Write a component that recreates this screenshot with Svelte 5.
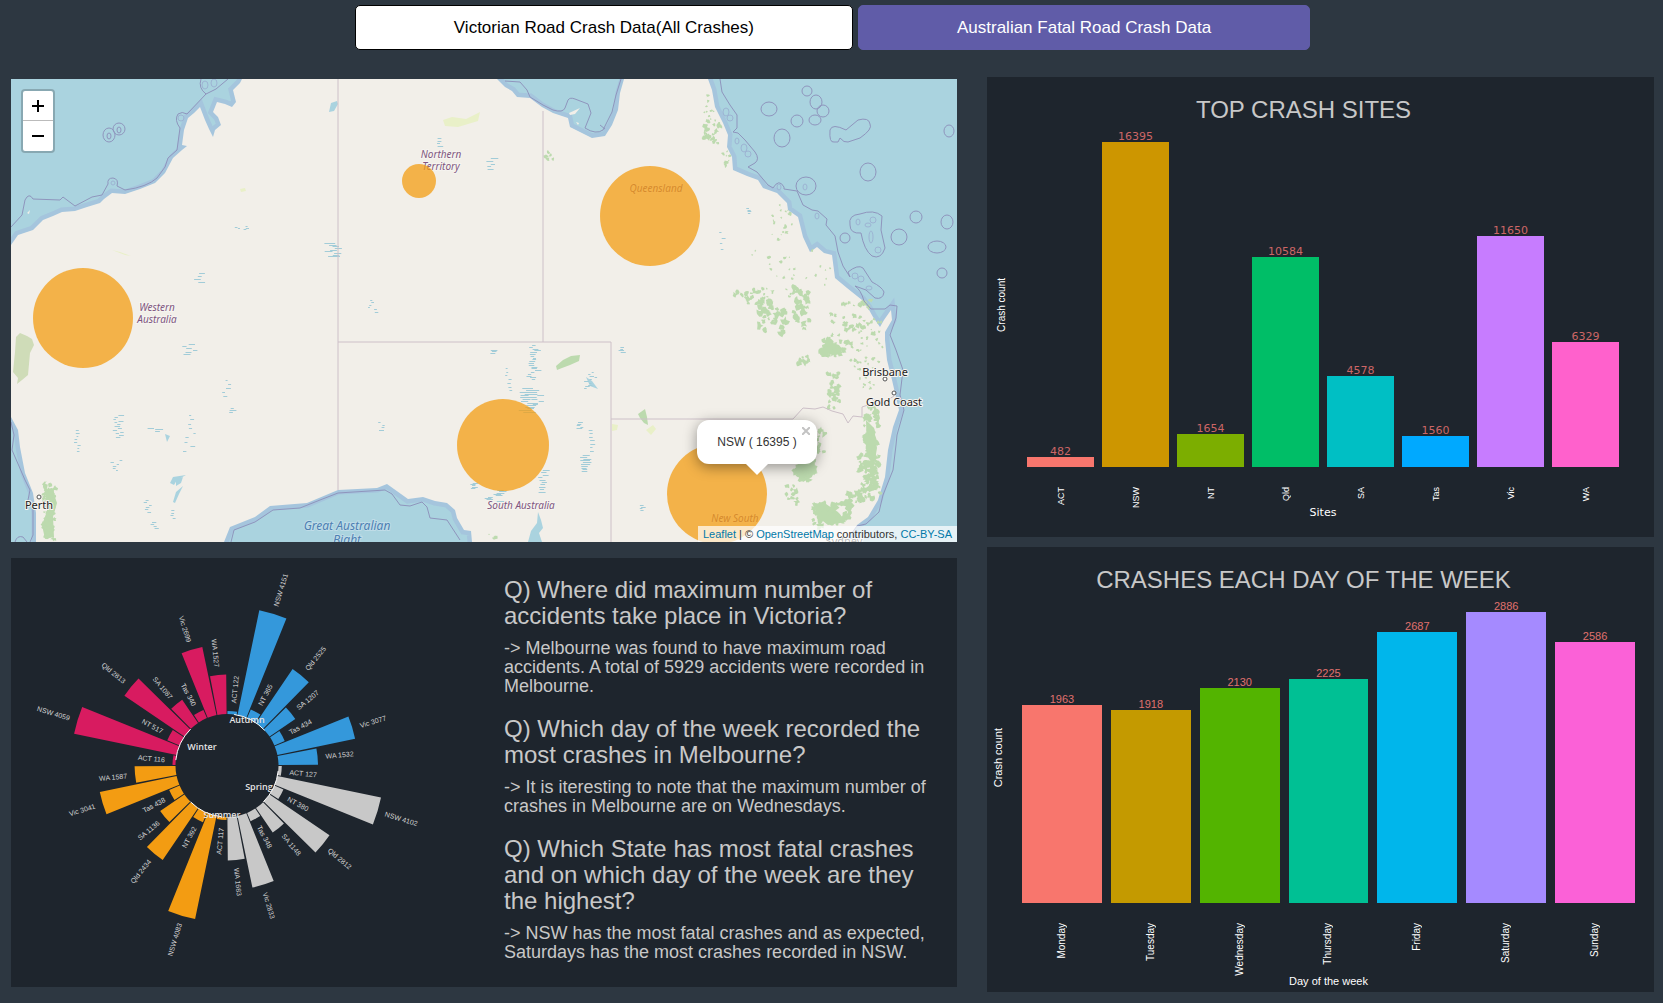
<script>
  const sites = {
    title: 'TOP CRASH SITES',
    kind: 'sites',
    xLabel: 'Sites',
    height: 325,
    bars: [
      { name: 'ACT', value: 482, color: '#f8766d' },
      { name: 'NSW', value: 16395, color: '#cd9600' },
      { name: 'NT', value: 1654, color: '#7cae00' },
      { name: 'Qld', value: 10584, color: '#00be67' },
      { name: 'SA', value: 4578, color: '#00bfc4' },
      { name: 'Tas', value: 1560, color: '#00a9ff' },
      { name: 'Vic', value: 11650, color: '#c77cff' },
      { name: 'WA', value: 6329, color: '#ff61cc' }
    ]
  };
  const days = {
    title: 'CRASHES EACH DAY OF THE WEEK',
    kind: 'days',
    xLabel: 'Day of the week',
    height: 291,
    bars: [
      { name: 'Monday', value: 1963, color: '#f8766d' },
      { name: 'Tuesday', value: 1918, color: '#c49a00' },
      { name: 'Wednesday', value: 2130, color: '#53b400' },
      { name: 'Thursday', value: 2225, color: '#00c094' },
      { name: 'Friday', value: 2687, color: '#00b6eb' },
      { name: 'Saturday', value: 2886, color: '#a58aff' },
      { name: 'Sunday', value: 2586, color: '#fb61d7' }
    ]
  };

  function barHeight(chart, value) {
    const max = Math.max(...chart.bars.map((b) => b.value));
    return Math.round((value / max) * chart.height);
  }

  const faqs = [
    ['Q) Where did maximum number of accidents take place in Victoria?', '-> Melbourne was found to have maximum road accidents. A total of 5929 accidents were recorded in Melbourne.'],
    ['Q) Which day of the week recorded the most crashes in Melbourne?', '-> It is iteresting to note that the maximum number of crashes in Melbourne are on Wednesdays.'],
    ['Q) Which State has most fatal crashes and on which day of the week are they the highest?', '-> NSW has the most fatal crashes and as expected, Saturdays has the most crashes recorded in NSW.']
  ];

  // Circular bar chart: seasons run clockwise from twelve o'clock, one quarter each.
  const states = ['ACT', 'NSW', 'NT', 'Qld', 'SA', 'Tas', 'Vic', 'WA'];
  const seasons = [
    { name: 'Autumn', color: '#3498db', values: [122, 4151, 365, 2525, 1207, 434, 3077, 1532], x: 247, y: 723 },
    { name: 'Spring', color: '#c8c8c8', values: [127, 4102, 380, 2812, 1148, 348, 2833, 1683], x: 259, y: 790 },
    { name: 'Summer', color: '#f39c12', values: [117, 4083, 392, 2434, 1136, 438, 3041, 1587], x: 222, y: 818 },
    { name: 'Winter', color: '#d81b60', values: [116, 4059, 517, 2813, 1087, 340, 2699, 1527], x: 202, y: 750 }
  ];
  const cx = 227;
  const cy = 765.5;
  const inner = 51.5;
  const step = 11.25;
  const at = (deg, r) => {
    const a = (deg * Math.PI) / 180;
    return `${(cx + r * Math.sin(a)).toFixed(1)} ${(cy - r * Math.cos(a)).toFixed(1)}`;
  };
  const petals = seasons.flatMap((s, q) =>
    s.values.map((value, i) => {
      const from = q * 90 + i * step + 0.5;
      const to = from + step - 1;
      const mid = (from + to) / 2;
      const outer = inner + value * 0.0258;
      return {
        color: s.color,
        d: `M${at(from, inner)}L${at(from, outer)}A${outer} ${outer} 0 0 1 ${at(to, outer)}L${at(to, inner)}A${inner} ${inner} 0 0 0 ${at(from, inner)}Z`,
        label: `${states[i]} ${value}`,
        flip: mid > 180,
        turn: mid > 180 ? mid + 90 : mid - 90,
        reach: outer + 8
      };
    })
  );
  const arcs = [8, 96, 186, 276].map((a) => `M${at(a, inner)}A${inner} ${inner} 0 0 1 ${at(a + 39, inner)}`);

  // Map decoration
  const land =
    'M11 245L18 235 33 230 43 220 53 216 62 212 75 211 87 207 100 203 104 199 112 193 125 194 140 189 155 183 165 173 173 158 182 150 187 146 182 145 184 130 188 118 194 113 200 107 205 120 209 129 213 137 215 130 221 125 218 117 213 112 217 102 225 104 232 107 236 102 233 90 240 83 242 79H497L505 87 512 91 517 97 530 98 542 107 553 113 568 118 570 127 580 132 592 138 605 136 612 125 618 110 620 93 624 79H708L712 90 715 107 723 123 728 135 727 147 732 157 733 170 747 176 758 180 763 188 777 193 787 203 788 210 798 217 803 237 810 252 817 247 824 253 832 255 835 278 847 288 862 300 868 308 873 317 880 327 884 320 891 310 892 320 885 332 885 340 887 360 892 380 895 393 899 410 893 427 888 450 885 477 878 500 868 517 857 525 847 542H472L471 531 464 530 457 518 455 510 447 503 435 501 423 497 408 499 387 484 377 488 338 490 307 503 270 506 255 517 230 527 224 542H36V513L33 493 25 473 20 447 18 430 11 417Z';
  const limits = [
    'M11 227L22 215 25 200Q29 192 33 199L60 200 63 197 75 206 92 197 102 195 108 184Q107 178 113 178Q119 179 117 186L125 190Q147 187 157 178L165 167 168 158 177 150 180 128Q174 120 178 114Q182 111 187 114L206 94 216 89 228 79M206 94Q198 88 201 79',
    'M505 81L520 82 527 90 530 97 543 105 553 110Q563 113 565 108L568 100Q570 97 575 99L588 104 591 113 585 128Q596 135 603 130L612 112 616 95 621 79M600 125l5 4',
    'M720 79L722 92 730 105 737 115 737 128 733 132 738 133 745 140 755 152Q760 159 755 163L748 167 757 172 768 185 773 188Q779 178 784 187L784 189 797 191 803 205 812 210 818 211 827 219 826 225 835 236 838 252 843 266 850 277 848 272Q858 264 863 268L872 282Q882 287 884 292Q883 300 875 298L866 290 855 286Q861 290 864 301L871 309 885 309 890 305 897 306 896 318 890 335 896 350 903 370 900 395 904 410 897 435 896 445 893 470 883 495 879 512 866 524 857 526 845 542',
    'M231 542L234 530 255 522 273 510 300 508 320 500 338 493 385 490 392 494 400 505 410 506 422 502 427 507 430 518 447 520 460 540',
    'M11 422L14 435 12 450 25 480 30 490 28 500 33 510 33 535 30 542M15 542Q17 535 23 537L27 542',
    'M830 130Q829 143 834 142L838 142 840 138Q844 143 848 142L860 138Q873 129 870 124Q869 117 858 120L846 130Q832 123 830 130Z',
    'M850 225Q848 215 860 214Q874 209 882 216L881 230 885 248Q881 260 872 256Q864 250 861 233Q850 234 850 225Z'
  ];
  const rings = [
    [109, 135, 6, 7], [119, 129, 6, 6], [109, 136, 2, 3], [119, 130, 2, 3], [769, 109, 8, 7], [807, 91, 5, 5], [816, 102, 6, 7], [823, 111, 6, 6], [815, 120, 6, 5],
    [797, 121, 6, 6], [782, 138, 8, 9], [868, 172, 8, 9], [949, 131, 5, 6], [806, 186, 10, 9], [916, 217, 6, 6],
    [947, 222, 6, 7], [899, 237, 8, 8], [937, 247, 9, 6], [845, 238, 5, 5], [942, 273, 5, 5]
  ];
  const reefs = [
    [726, 112, 3, 4], [730, 118, 3, 3], [737, 141, 2, 3], [744, 148, 3, 4], [748, 154, 3, 3], [805, 187, 2, 3], [779, 187, 2, 3],
    [817, 216, 2, 3], [858, 222, 2, 3], [868, 225, 3, 2], [873, 220, 3, 3], [871, 237, 2, 6], [878, 250, 3, 3], [855, 276, 3, 3],
    [861, 279, 3, 3], [869, 288, 3, 2], [113, 183, 2, 2], [181, 118, 3, 3], [205, 85, 3, 4], [214, 83, 3, 4]
  ];

  function random(seed) {
    return () => {
      seed = (seed * 16807) % 2147483647;
      return seed / 2147483647;
    };
  }
  const next = random(4177);
  // x, y, width, height, count, size
  const woods = [
    [704, 95, 10, 40, 14, 2], [704, 120, 16, 24, 20, 3], [722, 150, 8, 18, 10, 2], [772, 205, 20, 35, 20, 2],
    [750, 250, 80, 50, 34, 2], [735, 290, 35, 14, 22, 3], [758, 300, 28, 34, 34, 4], [793, 285, 16, 48, 32, 4],
    [825, 300, 50, 45, 40, 3], [820, 340, 28, 16, 26, 4], [850, 320, 33, 70, 44, 2], [828, 372, 13, 36, 34, 3],
    [864, 405, 14, 85, 80, 4], [858, 455, 22, 45, 44, 4], [813, 430, 12, 24, 18, 4], [795, 458, 20, 22, 34, 4],
    [785, 485, 12, 18, 12, 3], [812, 502, 38, 24, 60, 4], [845, 490, 16, 14, 18, 3], [43, 482, 12, 58, 70, 3],
    [544, 152, 10, 8, 9, 2], [486, 534, 12, 5, 6, 2], [796, 355, 14, 10, 10, 3]
  ];
  function blob(x, y, r) {
    let d = '';
    for (let i = 0; i < 9; i += 1) {
      const a = (i / 9) * Math.PI * 2;
      const k = r * (0.4 + next() * 0.9);
      d += `${i ? 'L' : 'M'}${(x + k * Math.cos(a)).toFixed(1)} ${(y + k * Math.sin(a)).toFixed(1)}`;
    }
    return d + 'Z';
  }
  const forest = woods
    .map(([x, y, w, h, n, s]) => Array.from({ length: n }, () => blob(x + next() * w, y + next() * h, s * (0.4 + next() * 0.6))).join(''))
    .join('');
  const waters = [
    [324, 243, 18, 15, 9, 12], [194, 273, 10, 12, 4, 8], [484, 158, 12, 14, 5, 8], [436, 138, 6, 10, 4, 6], [180, 344, 22, 12, 6, 8],
    [112, 415, 14, 24, 13, 6], [146, 428, 18, 4, 3, 10], [74, 430, 6, 24, 8, 4], [183, 415, 20, 40, 9, 5], [228, 408, 8, 6, 3, 7],
    [222, 380, 14, 20, 5, 5], [110, 460, 16, 12, 6, 4], [170, 510, 5, 10, 4, 5], [142, 500, 12, 14, 6, 5], [148, 522, 14, 8, 4, 6],
    [378, 422, 8, 10, 4, 5], [526, 345, 16, 36, 20, 7], [518, 388, 16, 26, 14, 15], [530, 390, 16, 16, 7, 8], [584, 372, 18, 18, 10, 5],
    [538, 470, 8, 24, 10, 8], [576, 422, 10, 8, 5, 6], [588, 430, 4, 24, 7, 5], [580, 455, 6, 18, 10, 10], [490, 350, 8, 4, 3, 8],
    [505, 368, 8, 26, 7, 4], [483, 490, 30, 12, 9, 8], [470, 483, 8, 6, 5, 6], [618, 347, 6, 6, 4, 6], [638, 505, 10, 6, 4, 5],
    [366, 300, 24, 14, 6, 4], [232, 226, 24, 4, 5, 4], [718, 232, 8, 22, 4, 4], [746, 208, 4, 6, 4, 4]
  ];
  const lakes = waters
    .map(([x, y, w, h, n, len]) =>
      Array.from({ length: n }, (_, i) => {
        const ly = Math.round(y + (i / n) * h) + 0.5;
        return `M${(x + next() * w * 0.6).toFixed(1)} ${ly}h${(len * (0.4 + next() * 0.6)).toFixed(1)}`;
      }).join('')
    )
    .join('');

  const crashCircles = [
    [83, 318, 50], [419, 181, 17], [650, 216, 50], [503, 445, 46], [717, 494, 50]
  ];
  let popupOpen = $state(true);
  let zoom = $state(5);
</script>

{#snippet barChart(chart)}
  <section class="panel chart {chart.kind}">
    <h3>{chart.title}</h3>
    <div class="chart-body">
      <span class="y-label">Crash count</span>
      <div class="bars">
        {#each chart.bars as bar}
          <div class="bar-slot">
            <span class="value">{bar.value}</span>
            <div class="bar" style="height: {barHeight(chart, bar.value)}px; background: {bar.color}"></div>
          </div>
        {/each}
      </div>
      <div class="ticks">
        {#each chart.bars as bar}
          <span>{bar.name}</span>
        {/each}
      </div>
      <span class="x-label">{chart.xLabel}</span>
    </div>
  </section>
{/snippet}

<div class="page">
  <nav class="tabs">
    <button class="tab" type="button">Victorian Road Crash Data(All Crashes)</button>
    <button class="tab active" type="button">Australian Fatal Road Crash Data</button>
  </nav>

  <main class="dashboard">
    <div class="left">
      <div class="map">
        <svg class="tiles" viewBox="11 79 946 463" preserveAspectRatio="xMidYMid slice" role="img" aria-label="Map of Australia">
          <rect class="sea" x="11" y="79" width="946" height="463" />
          <path class="shelf" d={land} />
          <path class="land" d={land} />
          <path class="sea" d="M528 542L531 531 537 523 538 512 541 520 543 528 539 533 542 542ZM331 103l6-2 1 3-4 7-5 1Z" />
          <path class="sea" d="M176 480l7-3-2 6-5 3ZM170 483l3-6 13-2-9 5-3 5ZM173 502l3-10 7-6-4 8-4 9ZM165 434l5 2-3 6ZM586 377l6 4 6 8-8-3Z" />
          <path class="land" d="M569 113l11-5-5 6-5 1ZM576 122l3 1-1 2ZM27 213l3-3-1 4Z" />
          <path class="park" d="M16 337l4-4 7 3 5 3 2 6-4 8-2 22-6 5-5 4 1-6-5-6 2-20Z" />
          <path class="forest" d="M556 366l7-6 8-4 9-1-1 6-9 4-8 3-5 2ZM638 414l7-5 2 8 1 8-4-2-4-5ZM822 345l8-3 9 3 4 5-8 5-12-2ZM812 503l14 1 12 8 8 10-18 3-9-7ZM800 463l14 2-2 12-9 5-5-6ZM866 420l8 8 3 20-3 18-7-10ZM45 490l7-2 5 15-4 14 1 20-9 2-3-14 5-14Z" />
          <path class="meadow" d="M646 430l7-5 3 4-5 6ZM612 424l6 1-1 5-5 1ZM112 250l8 2 11 4-6-1ZM443 120l9-3 14 2 14-7-2 9-20 6-13-1ZM240 189l5-1 1 3-5 1Z" />
          <path class="forest" d={forest} />
          <path class="lakes" d={lakes} />
          <path class="border" d="M338 79V490M543 111V342M338 342H611V542M611 419H793L803 408 815 409 823 407 832 411 843 414 848 423 853 416 862 417 862 407 868 405 874 400 886 401 894 396" />
          {#each limits as d}
            <path class="limit" {d} />
          {/each}
          {#each rings as [x, y, rx, ry]}
            <ellipse class="limit" cx={x} cy={y} {rx} {ry} />
          {/each}
          {#each reefs as [x, y, rx, ry]}
            <ellipse class="reef" cx={x} cy={y} {rx} {ry} />
          {/each}

          <g class="region">
            <text x="441" y="158">Northern</text>
            <text x="441" y="170">Territory</text>
            <text x="157" y="311">Western</text>
            <text x="157" y="323">Australia</text>
            <text x="521" y="509">South Australia</text>
            <text x="656" y="192">Queensland</text>
            <text x="735" y="522">New South</text>
          </g>
          <g class="water-name">
            <text x="347" y="530">Great Australian</text>
            <text x="347" y="544">Bight</text>
          </g>
          <g class="city">
            <circle cx="885" cy="379" r="2" />
            <circle cx="894" cy="393" r="2" />
            <circle cx="39" cy="497" r="2" />
            <text x="885" y="376">Brisbane</text>
            <text x="894" y="406">Gold Coast</text>
            <text x="39" y="509">Perth</text>
            <text x="844" y="545">Sydney</text>
          </g>
          {#each crashCircles as [x, y, r]}
            <circle class="crash" cx={x} cy={y} {r} />
          {/each}
        </svg>

        <div class="zoom">
          <button type="button" aria-label="Zoom in" onclick={() => (zoom += 1)}>
            <svg viewBox="0 0 12 12" width="12" height="12"><path d="M0 6H12M6 0V12" /></svg>
          </button>
          <button type="button" aria-label="Zoom out" onclick={() => (zoom -= 1)}>
            <svg viewBox="0 0 12 12" width="12" height="12"><path d="M0 6H12" /></svg>
          </button>
        </div>

        {#if popupOpen}
          <div class="popup">
            <span>NSW ( 16395 )</span>
            <button type="button" aria-label="Close popup" onclick={() => (popupOpen = false)}>
              <svg viewBox="0 0 8 8" width="8" height="8"><path d="M0 0L8 8M8 0L0 8" /></svg>
            </button>
          </div>
        {/if}

        <div class="attribution">
          <a href="#leaflet">Leaflet</a> | © <a href="#osm">OpenStreetMap</a> contributors, <a href="#licence">CC-BY-SA</a>
        </div>
      </div>

      <section class="panel insights">
        <svg class="rose" viewBox="11 558 493 429" role="img" aria-label="Fatal crashes by season and state">
          {#each petals as p}
            <path d={p.d} fill={p.color} />
          {/each}
          {#each arcs as d}
            <path class="arc" {d} />
          {/each}
          {#each petals as p}
            <text
              class="petal-label"
              transform="translate({cx} {cy}) rotate({p.turn})"
              x={p.flip ? -p.reach : p.reach}
              y="3"
              text-anchor={p.flip ? 'end' : 'start'}>{p.label}</text>
          {/each}
          {#each seasons as s}
            <text class="season" x={s.x} y={s.y}>{s.name}</text>
          {/each}
        </svg>
        <div class="faq">
          {#each faqs as [question, answer]}
            <h3>{question}</h3>
            <p>{answer}</p>
          {/each}
        </div>
      </section>
    </div>

    <div class="right">
      {@render barChart(sites)}
      {@render barChart(days)}
    </div>
  </main>
</div>

<style>
  :global(body) {
    margin: 0;
    background: #2d3741;
  }
  .page {
    box-sizing: border-box;
    min-height: 100vh;
    padding: 5px 9px 11px 11px;
    font-family: 'Liberation Sans', Arial, sans-serif;
    color: #c8c8c8;
  }
  h3,
  p {
    margin: 0;
    font-weight: 400;
  }
  .tabs {
    display: flex;
    justify-content: center;
    gap: 5px;
  }
  .tab {
    padding: 12px 98px;
    border: 1px solid #000;
    border-radius: 5px;
    background: #fff;
    color: #000;
    font: 17px/19px 'Liberation Sans', Arial, sans-serif;
  }
  .tab.active {
    border-color: #605ca8;
    background: #605ca8;
    color: #fff;
  }
  .dashboard {
    display: grid;
    grid-template-columns: 946fr 667fr;
    gap: 30px;
    align-items: start;
    padding-top: 27px;
  }
  .left {
    display: grid;
    gap: 16px;
    padding-top: 2px;
    min-width: 0;
  }
  .right {
    display: grid;
    gap: 10px;
    min-width: 0;
  }
  .panel {
    background: #1e252d;
  }

  .map {
    position: relative;
    height: 463px;
    overflow: hidden;
    background: #aad3df;
  }
  .tiles {
    display: block;
    width: 100%;
    height: 100%;
  }
  .sea {
    fill: #aad3df;
  }
  .land {
    fill: #f2efe9;
  }
  .shelf {
    fill: none;
    stroke: #a5c5dd;
    stroke-width: 9;
  }
  .park {
    fill: #cfdcb8;
  }
  .forest {
    fill: #bcdaae;
  }
  .meadow {
    fill: #e9f0c8;
  }
  .lakes {
    fill: none;
    stroke: #a2ccd8;
    stroke-width: 1;
  }
  .border {
    fill: none;
    stroke: #cdc0c8;
    stroke-width: 1;
  }
  .limit {
    fill: none;
    stroke: #8f95bd;
    stroke-width: 1;
  }
  .reef {
    fill: none;
    stroke: #9db4d3;
    stroke-width: 1;
  }
  .region text,
  .water-name text,
  .city text {
    font-family: 'Noto Sans', sans-serif;
    text-anchor: middle;
    paint-order: stroke;
    stroke: #f6f4f0;
    stroke-width: 2;
  }
  .region text {
    font-size: 10px;
    font-style: italic;
    fill: #80567f;
  }
  .water-name text {
    font-size: 12px;
    font-style: italic;
    fill: #4d80b3;
    stroke: #c0dde8;
  }
  .city text {
    font-size: 11px;
    fill: #222;
  }
  .city circle {
    fill: #fff;
    stroke: #555;
    stroke-width: 1;
  }
  .crash {
    fill: #f39c12;
    fill-opacity: 0.74;
  }
  .zoom {
    position: absolute;
    left: 10px;
    top: 10px;
    border: 2px solid rgba(0, 0, 0, 0.2);
    border-radius: 4px;
    background: #fff;
    background-clip: padding-box;
  }
  .zoom button {
    display: grid;
    place-items: center;
    width: 30px;
    height: 30px;
    padding: 0;
    border: 0;
    background: none;
  }
  .zoom button:first-child {
    border-bottom: 1px solid #bbb;
  }
  .zoom path {
    stroke: #000;
    stroke-width: 2;
  }
  .popup {
    position: absolute;
    left: calc(79% - 61px);
    top: 341px;
    padding: 14px 20px;
    border-radius: 12px;
    background: #fff;
    color: #333;
    font-size: 12px;
    line-height: 16px;
    white-space: nowrap;
    box-shadow: 0 3px 14px rgba(0, 0, 0, 0.4);
  }
  .popup::after {
    content: '';
    position: absolute;
    left: calc(50% - 11px);
    top: 100%;
    border: 11px solid transparent;
    border-top-color: #fff;
    border-bottom: 0;
  }
  .popup button {
    position: absolute;
    top: 7px;
    right: 7px;
    display: grid;
    padding: 0;
    border: 0;
    background: none;
  }
  .popup path {
    stroke: #c3c3c3;
    stroke-width: 2;
  }
  .attribution {
    position: absolute;
    right: 0;
    bottom: 0;
    padding: 0 5px;
    background: rgba(255, 255, 255, 0.7);
    color: #333;
    font-size: 11px;
    line-height: 16px;
  }
  .attribution a {
    color: #0078a8;
    text-decoration: none;
  }

  .insights {
    display: grid;
    grid-template-columns: 493fr 453fr;
  }
  .rose {
    display: block;
    width: 100%;
  }
  .arc {
    fill: none;
    stroke: #fff;
    stroke-width: 1;
  }
  .petal-label {
    font-size: 7px;
    fill: #d4d4d4;
  }
  .season {
    font-size: 9px;
    font-weight: 600;
    font-family: 'Open Sans', sans-serif;
    text-anchor: middle;
    fill: #e4e4e4;
  }
  .faq {
    padding: 19px 15px 25px 0;
  }
  .faq h3 {
    margin-bottom: 10px;
    font-size: 24px;
    line-height: 26px;
  }
  .faq p {
    font-size: 18px;
    line-height: 19px;
  }
  .faq p + h3 {
    margin-top: 20px;
  }

  .chart {
    padding-top: 20px;
  }
  .chart h3 {
    padding-right: 34px;
    font-size: 24px;
    line-height: 26px;
    text-align: center;
  }
  .chart-body {
    display: grid;
    padding-top: 19px;
  }
  .sites .chart-body {
    grid-template-columns: 30px 1fr;
    grid-template-rows: 325px 39px 14px;
    column-gap: 10px;
    padding-right: 35px;
    padding-bottom: 17px;
  }
  .days .chart-body {
    grid-template-columns: 22px 1fr;
    grid-template-rows: 291px 71px 14px;
    column-gap: 13px;
    padding-right: 19px;
    padding-bottom: 4px;
  }
  .bars,
  .ticks {
    display: grid;
    grid-auto-flow: column;
    grid-auto-columns: 1fr;
    gap: 8px;
  }
  .bars {
    grid-template-rows: minmax(0, 1fr);
    min-height: 0;
  }
  .days .bars,
  .days .ticks {
    gap: 9px;
  }
  .bar-slot {
    display: flex;
    flex-direction: column;
    justify-content: flex-end;
    min-width: 0;
    min-height: 0;
  }
  .bar,
  .value {
    flex: none;
  }
  .value {
    color: #e0716d;
    font-size: 11px;
    line-height: 11px;
    text-align: center;
  }
  .ticks {
    grid-column: 2;
    padding-top: 20px;
    justify-items: center;
    align-items: start;
    color: #fff;
    font-size: 10px;
    line-height: 12px;
  }
  .ticks span,
  .y-label {
    writing-mode: vertical-rl;
    transform: rotate(180deg);
    white-space: nowrap;
  }
  .y-label,
  .x-label {
    color: #fff;
    font-size: 11px;
    line-height: 14px;
    place-self: center;
  }
  .x-label {
    grid-column: 2;
  }
  .sites .value,
  .sites .x-label {
    font-family: 'DejaVu Sans', sans-serif;
  }
  .sites .value {
    color: #cc6666;
    line-height: 10px;
  }
  .sites .y-label {
    font-size: 10px;
  }
  .sites .ticks {
    font-size: 9px;
  }
</style>
